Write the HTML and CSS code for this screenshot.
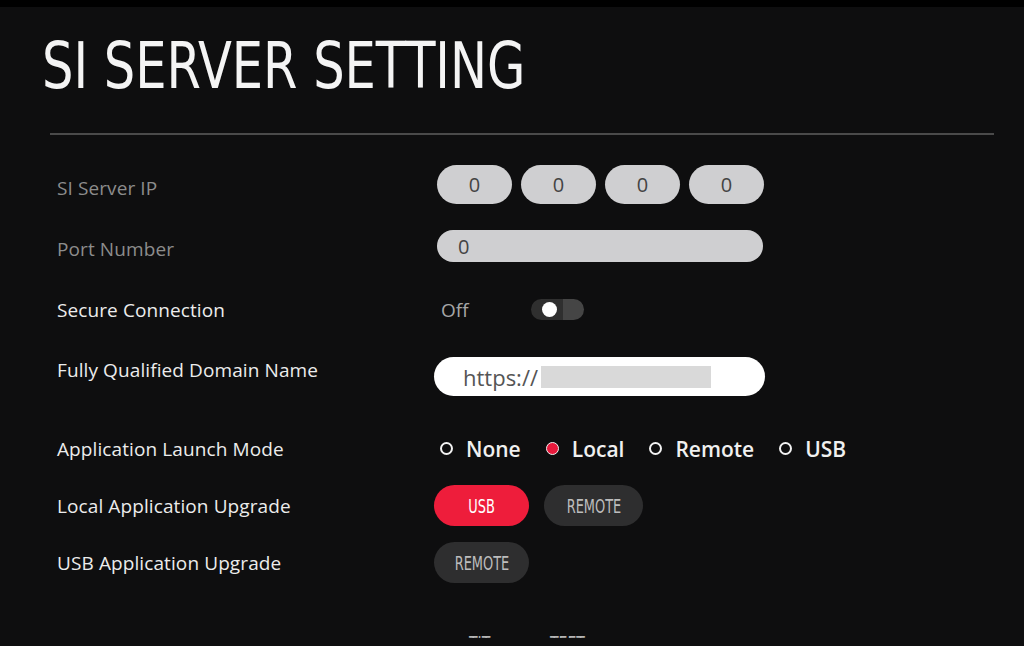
FILE: index.html
```html
<!DOCTYPE html>
<html>
<head>
<meta charset="utf-8">
<title>SI Server Setting</title>
<link rel="stylesheet" href="styles.css">
</head>
<body>
<div class="screen">
  <header class="header">
    <h1 class="title"><span class="title-text">SI SERVER SETTING</span></h1>
  </header>
  <div class="divider"></div>
  <div class="form">
    <div class="row">
      <div class="label dim">SI Server IP</div>
      <div class="control ip">
        <div class="pill ip-pill">0</div>
        <div class="pill ip-pill">0</div>
        <div class="pill ip-pill">0</div>
        <div class="pill ip-pill">0</div>
      </div>
    </div>
    <div class="row">
      <div class="label dim">Port Number</div>
      <div class="control port">
        <div class="pill port-pill">0</div>
      </div>
    </div>
    <div class="row">
      <div class="label">Secure Connection</div>
      <div class="control toggle-wrap">
        <span class="off-text">Off</span>
        <span class="toggle"><span class="knob"></span></span>
      </div>
    </div>
    <div class="row row-fqdn">
      <div class="label fqdn-label">Fully Qualified Domain Name</div>
      <div class="control">
        <div class="url-input"><span class="url-prefix">https://</span><span class="redact"></span></div>
      </div>
    </div>
    <div class="row row-compact">
      <div class="label">Application Launch Mode</div>
      <div class="control radios">
        <span class="radio"><span class="dot"></span>None</span>
        <span class="radio"><span class="dot on"></span>Local</span>
        <span class="radio"><span class="dot"></span>Remote</span>
        <span class="radio"><span class="dot"></span>USB</span>
      </div>
    </div>
    <div class="row row-compact">
      <div class="label">Local Application Upgrade</div>
      <div class="control buttons">
        <span class="btn btn-red"><span class="btn-text">USB</span></span>
        <span class="btn btn-dark btn-wide"><span class="btn-text">REMOTE</span></span>
      </div>
    </div>
    <div class="row row-compact">
      <div class="label">USB Application Upgrade</div>
      <div class="control buttons">
        <span class="btn btn-dark"><span class="btn-text">REMOTE</span></span>
      </div>
    </div>
    <div class="row row-cut">
      <div class="label"></div>
      <div class="control cut-items">
        <span class="cut-text cut-first">TIT</span>
        <span class="cut-text cut-second">TEET</span>
      </div>
    </div>
  </div>
</div>
</body>
</html>
```
FILE: styles.css
```css
html, body {
  margin: 0;
  padding: 0;
}
body {
  width: 1024px;
  height: 646px;
  overflow: hidden;
  background: #0e0e0f;
  font-family: "Open Sans", "Noto Sans", sans-serif;
  color: #e8e8e8;
}
.screen {
  height: 646px;
  box-sizing: border-box;
  border-top: 7px solid #000;
  overflow: hidden;
}
.header {
  padding: 27px 0 0 42px;
}
.title {
  margin: 0;
  font-family: "DejaVu Sans Condensed", "DejaVu Sans", sans-serif;
  font-stretch: condensed;
  font-weight: normal;
  font-size: 64px;
  line-height: 64px;
  color: #f4f4f4;
  white-space: nowrap;
}
.title-text {
  display: inline-block;
  transform: scaleX(0.86);
  transform-origin: left center;
}
.divider {
  margin: 35px 0 0 50px;
  width: 944px;
  height: 2px;
  background: #4a4a4a;
}
.form {
  margin-top: 22px;
  padding-left: 57px;
  height: 481px;
  overflow: hidden;
}
.row {
  display: grid;
  grid-template-columns: 377px 1fr;
  align-items: center;
  height: 61px;
  box-sizing: border-box;
}
.row-fqdn {
  height: 80px;
  align-items: start;
  padding-top: 17px;
}
.row-compact {
  height: 57px;
}
.label {
  font-size: 19px;
  line-height: 24px;
  letter-spacing: 0.1px;
  color: #ececec;
  white-space: nowrap;
}
.label.dim {
  color: #8c8c8c;
}
.fqdn-label {
  padding-top: 1px;
}
.control {
  display: flex;
  align-items: center;
}
.pill {
  background: #cfcfd1;
  color: #444;
  font-size: 20px;
  display: flex;
  align-items: center;
}
.ip {
  gap: 9px;
  padding-left: 3px;
  margin-bottom: 7px;
}
.ip-pill {
  width: 75px;
  height: 39px;
  border-radius: 20px;
  justify-content: center;
}
.port {
  margin-bottom: 5px;
}
.port-pill {
  margin-left: 3px;
  width: 326px;
  height: 32px;
  border-radius: 16px;
  box-sizing: border-box;
  padding-left: 21px;
}
.toggle-wrap {
  padding-left: 7px;
}
.off-text {
  width: 90px;
  font-size: 19px;
  color: #a6a6a6;
}
.toggle {
  position: relative;
  width: 53px;
  height: 21px;
  border-radius: 11px;
  background: linear-gradient(to right, #2f2f2f 0, #2f2f2f 60%, #454545 60%, #454545 100%);
}
.knob {
  position: absolute;
  left: 11px;
  top: 3px;
  width: 15px;
  height: 15px;
  border-radius: 50%;
  background: #fff;
}
.url-input {
  width: 331px;
  height: 39px;
  border-radius: 20px;
  background: #fff;
  box-sizing: border-box;
  padding-left: 29px;
  display: flex;
  align-items: center;
}
.url-prefix {
  font-size: 22px;
  color: #555;
}
.redact {
  margin-left: 3px;
  width: 170px;
  height: 22px;
  background: #d9d9d9;
}
.radios {
  padding-left: 6px;
  gap: 25px;
}
.radio {
  display: flex;
  align-items: center;
  gap: 13px;
  font-size: 21px;
  font-weight: 600;
  color: #f0f0f0;
}
.dot {
  width: 13px;
  height: 13px;
  box-sizing: border-box;
  border-radius: 50%;
  border: 2.5px solid #f2f2f2;
}
.dot.on {
  background: #e8193c;
  border: 1.5px solid #f2f2f2;
}
.buttons {
  gap: 15px;
}
.btn {
  width: 95px;
  height: 41px;
  border-radius: 21px;
  display: flex;
  align-items: center;
  justify-content: center;
  font-family: "DejaVu Sans Condensed", "DejaVu Sans", sans-serif;
  font-stretch: condensed;
  font-size: 20px;
}
.btn-text {
  display: inline-block;
  transform: scaleX(0.72);
}
.btn-wide {
  width: 99px;
}
.btn-red {
  background: #ee1d3b;
  color: #fff;
}
.btn-dark {
  background: #2e2e2f;
  color: #bdbdbd;
}
.row-cut {
  align-items: start;
  padding-top: 40px;
}
.cut-items {
  padding-left: 35px;
  font-family: "DejaVu Sans Condensed", "DejaVu Sans", sans-serif;
  font-stretch: condensed;
  font-size: 20px;
  color: #b5b5b5;
}
.cut-text {
  display: inline-block;
  transform: scaleX(0.78);
  transform-origin: left center;
}
.cut-second {
  margin-left: 54px;
}
```
